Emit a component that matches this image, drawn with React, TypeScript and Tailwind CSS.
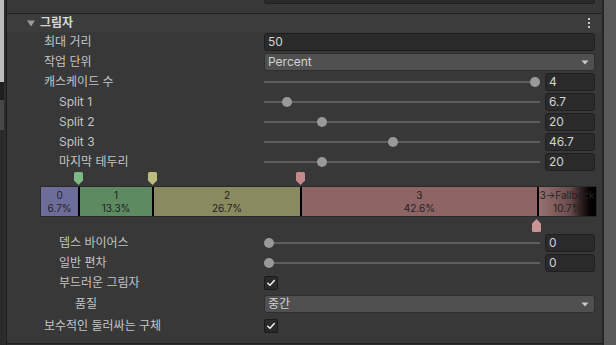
import React from "react";

const segs = [
  { name: "0", pct: 6.7, cls: "bg-[#6d6d9a]" },
  { name: "1", pct: 13.3, cls: "bg-[#5e8a62]" },
  { name: "2", pct: 26.7, cls: "bg-[#8a8a60]" },
  { name: "3", pct: 42.6, cls: "bg-[#8e6464]" },
];

function Label({ text, indent = 0 }: { text: string; indent?: number }) {
  const pl = indent === 0 ? "pl-[37px]" : indent === 1 ? "pl-[52px]" : "pl-[68px]";
  return (
    <div className={`w-[257px] shrink-0 ${pl} text-[12px] leading-none text-[#c4c4c4] whitespace-nowrap`}>
      {text}
    </div>
  );
}

function NumField({ value, wide }: { value: string; wide?: boolean }) {
  return (
    <div
      className={`${wide ? "flex-1" : "w-[50px] shrink-0"} h-[18px] rounded-[3px] bg-[#2a2a2a] border border-[#1f1f1f] pl-[3px] flex items-center text-[12px] leading-none text-[#d2d2d2]`}
    >
      {value}
    </div>
  );
}

function Dropdown({ value }: { value: string }) {
  return (
    <div className="flex-1 h-[18px] rounded-[3px] bg-[#505050] border border-[#2f2f2f] pl-[3px] pr-[5px] flex items-center justify-between text-[12px] leading-none text-[#d2d2d2]">
      <span>{value}</span>
      <svg width="8" height="5" viewBox="0 0 8 5">
        <path d="M0.5 0.5 H7.5 L4 4.5 Z" fill="#c8c8c8" />
      </svg>
    </div>
  );
}

function Slider({ pct, value }: { pct: number; value: string }) {
  return (
    <div className="flex-1 flex items-center gap-[5px]">
      <div className="relative flex-1 h-[18px]">
        <div className="absolute left-0 right-0 top-[8px] h-[2px] bg-[#5e5e5e]" />
        <div
          className="absolute top-[4px] w-[10px] h-[10px] rounded-full bg-[#999999]"
          style={{ left: `calc(${pct} * (100% - 10px))` }}
        />
      </div>
      <NumField value={value} />
    </div>
  );
}

function Check() {
  return (
    <div className="w-[14px] h-[14px] rounded-[2px] bg-[#2a2a2a] border border-[#1a1a1a] flex items-center justify-center">
      <svg width="10" height="10" viewBox="0 0 10 10">
        <path d="M1.8 5.2 L4 7.3 L8.3 2.6" fill="none" stroke="#f0f0f0" strokeWidth="1.5" strokeLinecap="round" strokeLinejoin="round" />
      </svg>
    </div>
  );
}

function Row({ children, h = "h-[20px]" }: { children: React.ReactNode; h?: string }) {
  return <div className={`flex items-center ${h} pr-[7px] shrink-0`}>{children}</div>;
}

function MarkerDown({ color }: { color: string }) {
  return (
    <svg width="9" height="13" viewBox="0 0 9 13">
      <path d="M1.5 0 H7.5 Q9 0 9 1.5 V8.5 L4.5 13 L0 8.5 V1.5 Q0 0 1.5 0 Z" fill={color} />
    </svg>
  );
}

function MarkerUp({ color }: { color: string }) {
  return (
    <svg width="9" height="13" viewBox="0 0 9 13">
      <path d="M4.5 0 L9 4.5 V11.5 Q9 13 7.5 13 H1.5 Q0 13 0 11.5 V4.5 Z" fill={color} />
    </svg>
  );
}

function CascadeBar() {
  const innerW = 555;
  const cum: number[] = [];
  let c = 0;
  for (const s of segs) {
    c += s.pct;
    cum.push(c);
  }
  const markerColors = ["#7db887", "#bcbc7e", "#c28a8a"];
  return (
    <div className="ml-[33px] w-[557px] flex flex-col shrink-0">
      <div className="relative h-[14px]">
        {cum.slice(0, 3).map((v, i) => (
          <div key={i} className="absolute top-0" style={{ left: `${1 + (v * innerW) / 100 - 4.5}px` }}>
            <MarkerDown color={markerColors[i]} />
          </div>
        ))}
      </div>
      <div className="h-[31px] border border-[#2a2a2a] flex">
        {segs.map((s, i) => (
          <div
            key={s.name}
            className={`${s.cls} ${i > 0 ? "border-l-2 border-black" : ""} h-full flex flex-col items-center justify-center text-[10px] leading-[12.5px] text-[#222222] overflow-hidden whitespace-nowrap`}
            style={{ width: `${(s.pct * innerW) / 100}px` }}
          >
            <span>{s.name}</span>
            <span>{s.pct}%</span>
          </div>
        ))}
        <div className="flex-1 h-full border-l-2 border-black bg-linear-to-r from-[#987070] via-[#6a4c4c] via-55% to-[#000000] flex flex-col justify-center text-[10px] leading-[12.5px] text-[#222222] overflow-hidden whitespace-nowrap">
          <span className="pl-[1px]">3→Fallback</span>
          <span className="text-center">10.7%</span>
        </div>
      </div>
      <div className="relative h-[16px]">
        <div className="absolute top-[2px]" style={{ left: `${1 + (cum[3] * innerW) / 100 - 4.5}px` }}>
          <MarkerUp color="#c99494" />
        </div>
      </div>
    </div>
  );
}

export default function App() {
  return (
    <div className="flex w-[616px] h-[345px] overflow-hidden bg-[#383838] font-['Inter','Noto_Sans_CJK_KR',sans-serif]">
      <div className="w-[4px] shrink-0 flex flex-col">
        <div className="h-[82px] bg-[#bdbdbd]" />
        <div className="h-[18px] bg-[#1e1e1e]" />
        <div className="h-[30px] bg-[#474747]" />
        <div className="flex-1 bg-[#2a2a2a]" />
      </div>
      <div className="w-[2px] shrink-0 bg-[#2c2c2c]" />
      <div className="w-px shrink-0 bg-[#1c1c1c]" />
      <div className="flex-1 min-w-0 flex flex-col">
        <div className="h-[13px] shrink-0 overflow-hidden">
          <div className="-mt-[15px]">
            <Row>
              <Label text="최대 광원 수" />
              <NumField value="16" wide />
            </Row>
          </div>
        </div>
        <div className="h-px shrink-0 bg-[#232323]" />
        <div className="h-[18px] shrink-0 bg-[#3c3c3c] flex items-center pl-[20px] pr-[12px]">
          <svg width="8" height="7" viewBox="0 0 8 7" className="shrink-0">
            <path d="M0 0.5 H8 L4 6.5 Z" fill="#9a9a9a" />
          </svg>
          <span className="ml-[5px] text-[12px] font-bold leading-none text-[#d6d6d6]">그림자</span>
          <div className="ml-auto flex flex-col gap-[1.5px]">
            <div className="w-[2.5px] h-[2.5px] bg-[#c8c8c8]" />
            <div className="w-[2.5px] h-[2.5px] bg-[#c8c8c8]" />
            <div className="w-[2.5px] h-[2.5px] bg-[#c8c8c8]" />
          </div>
        </div>
        <Row>
          <Label text="최대 거리" />
          <NumField value="50" wide />
        </Row>
        <Row>
          <Label text="작업 단위" />
          <Dropdown value="Percent" />
        </Row>
        <Row>
          <Label text="캐스케이드 수" />
          <Slider pct={1} value="4" />
        </Row>
        <Row>
          <Label text="Split 1" indent={1} />
          <Slider pct={0.067} value="6.7" />
        </Row>
        <Row>
          <Label text="Split 2" indent={1} />
          <Slider pct={0.2} value="20" />
        </Row>
        <Row>
          <Label text="Split 3" indent={1} />
          <Slider pct={0.467} value="46.7" />
        </Row>
        <Row>
          <Label text="마지막 테두리" indent={1} />
          <Slider pct={0.2} value="20" />
        </Row>
        <CascadeBar />
        <Row>
          <Label text="뎁스 바이어스" indent={1} />
          <Slider pct={0} value="0" />
        </Row>
        <Row>
          <Label text="일반 편차" indent={1} />
          <Slider pct={0} value="0" />
        </Row>
        <Row>
          <Label text="부드러운 그림자" indent={1} />
          <Check />
        </Row>
        <Row h="h-[22px]">
          <Label text="품질" indent={2} />
          <Dropdown value="중간" />
        </Row>
        <Row h="h-[22px]">
          <Label text="보수적인 둘러싸는 구체" />
          <Check />
        </Row>
        <div className="flex-1" />
        <div className="h-px shrink-0 bg-[#1f1f1f]" />
        <div className="h-px shrink-0 bg-[#2e2e2e]" />
      </div>
      <div className="w-[2px] shrink-0 bg-[#262626]" />
      <div className="w-[12px] shrink-0 bg-[#5a5a5a]" />
    </div>
  );
}
